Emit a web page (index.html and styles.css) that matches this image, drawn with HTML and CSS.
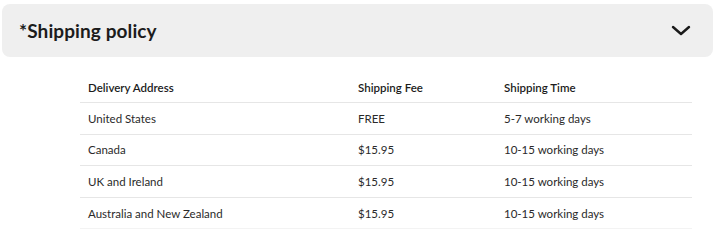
FILE: index.html
```html
<!DOCTYPE html>
<html lang="en">
<head>
    <meta charset="UTF-8">
    <meta name="viewport" content="width=device-width, initial-scale=1.0">
    <title>Shipping policy</title>
    <link rel="stylesheet" href="styles.css">
</head>
<body>
    <div class="accordion">
        <div class="accordion-head">
            <h2 class="accordion-title">*Shipping policy</h2>
            <svg class="chevron" width="20" height="11" viewBox="0 0 20 11">
                <polyline points="2,2 10,9 18,2" fill="none" stroke="#1a1a1a" stroke-width="2.4" stroke-linecap="round" stroke-linejoin="round"/>
            </svg>
        </div>
        <table class="shipping-table">
            <thead>
                <tr>
                    <th class="col-address">Delivery Address</th>
                    <th class="col-fee">Shipping Fee</th>
                    <th>Shipping Time</th>
                </tr>
            </thead>
            <tbody>
                <tr>
                    <td>United States</td>
                    <td>FREE</td>
                    <td>5-7 working days</td>
                </tr>
                <tr>
                    <td>Canada</td>
                    <td>$15.95</td>
                    <td>10-15 working days</td>
                </tr>
                <tr>
                    <td>UK and Ireland</td>
                    <td>$15.95</td>
                    <td>10-15 working days</td>
                </tr>
                <tr class="last">
                    <td>Australia and New Zealand</td>
                    <td>$15.95</td>
                    <td>10-15 working days</td>
                </tr>
            </tbody>
        </table>
    </div>
</body>
</html>
```

FILE: styles.css
```css
body {
    font-family: Lato, "Noto Sans", sans-serif;
    margin: 0;
    padding: 0;
    background-color: #fff;
    color: #1c1c1c;
}
.accordion {
    margin: 4px 5px 0 2px;
}
.accordion-head {
    display: flex;
    align-items: center;
    justify-content: space-between;
    height: 53px;
    padding: 0 22px 0 17px;
    background-color: #efefef;
    border-radius: 8px;
}
.accordion-title {
    margin: 0;
    font-size: 19px;
    font-weight: 700;
    letter-spacing: 0.1px;
}
.chevron {
    display: block;
}
.shipping-table {
    width: 612px;
    margin: 15px 0 0 78px;
    border-collapse: collapse;
    font-size: 11.5px;
}
.shipping-table th,
.shipping-table td {
    text-align: left;
    padding: 0 8px;
    border-bottom: 1px solid #e6e6e6;
}
.shipping-table th {
    height: 30px;
    font-weight: 600;
}
.shipping-table td {
    height: 30.6px;
    font-weight: 400;
    color: #2a2a2a;
}
.shipping-table .last td {
    border-bottom-color: #f3f3f3;
}
.col-address {
    width: 254px;
}
.col-fee {
    width: 130px;
}
```
